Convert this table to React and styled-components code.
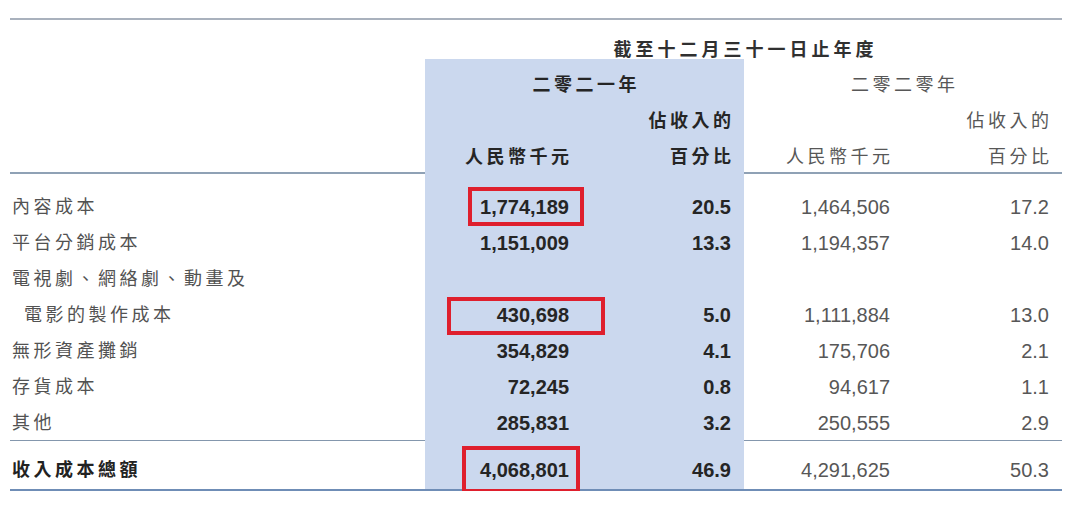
import styled, { createGlobalStyle } from "styled-components";

const GlobalStyle = createGlobalStyle`
  body {
    margin: 0;
    background: #fff;
    font-family: "Liberation Sans", "Noto Sans CJK TC", sans-serif;
  }
`;

const Page = styled.div`
  padding: 18px 0 0 10px;
`;

const Table = styled.div`
  width: 1052px;
  border-top: 2px solid #a9b1bd;
`;

const Row = styled.div`
  display: grid;
  grid-template-columns: 415px 159px 160px 160px 158px;
  height: ${(p) => p.$h || 36}px;
  border-bottom: ${(p) => p.$line || "none"};
`;

const Cell = styled.div`
  position: relative;
  grid-column: ${(p) => (p.$start ? `${p.$start} / ` : "")}span ${(p) => p.$span || 1};
  background: ${(p) => (p.$band ? "#cbd8ee" : "transparent")};
  text-align: ${(p) => p.$align || "right"};
  padding-right: ${(p) => p.$pr || 0}px;
  padding-top: ${(p) => p.$pt || 0}px;
  line-height: 36px;
  font-size: 20px;
  font-weight: ${(p) => (p.$bold ? 700 : 400)};
  color: ${(p) => (p.$bold ? "#252525" : "#575757")};
`;

const Cjk = styled.span`
  font-size: 18px;
  letter-spacing: 3.5px;
  margin-right: ${(p) => (p.$center ? 0 : -3.5)}px;
  padding-left: ${(p) => (p.$center ? 3.5 : 0)}px;
`;

const Title = styled.span`
  font-size: 18px;
  font-weight: 700;
  letter-spacing: 4px;
  padding-left: 4px;
  color: #303030;
  line-height: 28px;
`;

const Label = styled.div`
  padding-left: ${(p) => 2 + (p.$indent || 0)}px;
  padding-top: ${(p) => p.$pt || 0}px;
  font-size: 18px;
  letter-spacing: 3.5px;
  line-height: 36px;
  font-weight: ${(p) => (p.$bold ? 700 : 400)};
  color: ${(p) => (p.$bold ? "#222" : "#525252")};
`;

const Mark = styled.div`
  position: absolute;
  left: ${(p) => p.$l}px;
  right: ${(p) => p.$r}px;
  top: ${(p) => p.$t}px;
  bottom: ${(p) => p.$b}px;
  border: 4px solid #df1f2d;
  z-index: 2;
  pointer-events: none;
`;

const PAD = [15, 13, 14, 13];

const rows = [
  { label: "內容成本", v1: "1,774,189", p1: "20.5", v2: "1,464,506", p2: "17.2", mark: { l: 43, r: 0, t: -2, b: -1 } },
  { label: "平台分銷成本", v1: "1,151,009", p1: "13.3", v2: "1,194,357", p2: "14.0" },
  { label: "電視劇、網絡劇、動畫及" },
  { label: "電影的製作成本", indent: 12, v1: "430,698", p1: "5.0", v2: "1,111,884", p2: "13.0", mark: { l: 22, r: -21, t: 0, b: -2 } },
  { label: "無形資產攤銷", v1: "354,829", p1: "4.1", v2: "175,706", p2: "2.1" },
  { label: "存貨成本", v1: "72,245", p1: "0.8", v2: "94,617", p2: "1.1" },
  { label: "其他", v1: "285,831", p1: "3.2", v2: "250,555", p2: "2.9" },
];

function BodyRow({ r, last }) {
  return (
    <Row $h={last ? 35 : 36} $line={last ? "1px solid #8497ad" : "none"}>
      <Label $indent={r.indent}>{r.label}</Label>
      <Cell $band $bold $pr={PAD[0]}>
        {r.v1}
        {r.mark && <Mark $l={r.mark.l} $r={r.mark.r} $t={r.mark.t} $b={r.mark.b} />}
      </Cell>
      <Cell $band $bold $pr={PAD[1]}>{r.p1}</Cell>
      <Cell $pr={PAD[2]}>{r.v2}</Cell>
      <Cell $pr={PAD[3]}>{r.p2}</Cell>
    </Row>
  );
}

export default function App() {
  return (
    <Page>
      <GlobalStyle />
      <Table>
        <Row $h={39}>
          <Cell $start={2} $span={4} $align="center" $pt={11}>
            <Title>截至十二月三十一日止年度</Title>
          </Cell>
        </Row>
        <Row $h={43}>
          <Cell $start={2} $span={2} $band $bold $align="center" $pt={7}>
            <Cjk $center>二零二一年</Cjk>
          </Cell>
          <Cell $span={2} $align="center" $pt={7}>
            <Cjk $center>二零二零年</Cjk>
          </Cell>
        </Row>
        <Row>
          <Cell $start={2} $band />
          <Cell $band $bold $pr={PAD[1]}><Cjk>佔收入的</Cjk></Cell>
          <Cell />
          <Cell $pr={PAD[3]}><Cjk>佔收入的</Cjk></Cell>
        </Row>
        <Row $h={34} $line="2px solid #8fa1b5">
          <Cell $start={2} $band $bold $pr={PAD[0]}><Cjk>人民幣千元</Cjk></Cell>
          <Cell $band $bold $pr={PAD[1]}><Cjk>百分比</Cjk></Cell>
          <Cell $pr={PAD[2]}><Cjk>人民幣千元</Cjk></Cell>
          <Cell $pr={PAD[3]}><Cjk>百分比</Cjk></Cell>
        </Row>
        <Row $h={15}>
          <Cell $start={2} $band />
          <Cell $band />
        </Row>
        {rows.map((r, i) => (
          <BodyRow key={r.label} r={r} last={i === rows.length - 1} />
        ))}
        <Row $h={48} $line="2px solid #6f8db6">
          <Label $bold $pt={11}>收入成本總額</Label>
          <Cell $band $bold $pr={PAD[0]} $pt={11}>
            4,068,801
            <Mark $l={37} $r={4} $t={5} $b={-4} />
          </Cell>
          <Cell $band $bold $pr={PAD[1]} $pt={11}>46.9</Cell>
          <Cell $pr={PAD[2]} $pt={11}>4,291,625</Cell>
          <Cell $pr={PAD[3]} $pt={11}>50.3</Cell>
        </Row>
      </Table>
    </Page>
  );
}
